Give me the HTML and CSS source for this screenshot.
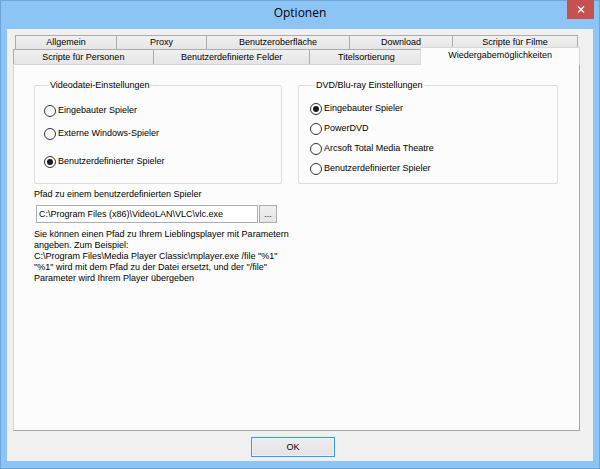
FILE: index.html
```html
<!DOCTYPE html>
<html lang="de">
<head>
<meta charset="utf-8">
<title>Optionen</title>
<link rel="stylesheet" href="styles.css">
</head>
<body>
<div class="window">
  <div class="titlebar">
    <span class="title">Optionen</span>
    <button class="close" aria-label="Schließen">
      <svg width="8" height="7" viewBox="0 0 8 7"><path d="M1 0.5 L7 6.5 M7 0.5 L1 6.5" stroke="#fff" stroke-width="1.4" fill="none"/></svg>
    </button>
  </div>
  <div class="client">
    <div class="tabs">
      <div class="tabrow row1">
        <div class="tab t-allg">Allgemein</div>
        <div class="tab t-proxy">Proxy</div>
        <div class="tab t-ui">Benutzeroberfläche</div>
        <div class="tab t-dl">Download</div>
        <div class="tab t-sf">Scripte für Filme</div>
      </div>
      <div class="tabrow row2">
        <div class="tab t-sp">Scripte für Personen</div>
        <div class="tab t-bf">Benutzerdefinierte Felder</div>
        <div class="tab t-ts">Titelsortierung</div>
        <div class="tab t-wm active">Wiedergabemöglichkeiten</div>
      </div>
    </div>
    <div class="panel">
      <div class="groups">
        <fieldset class="group g-video">
          <legend>Videodatei-Einstellungen</legend>
          <label class="radio"><span class="circle"></span><span>Eingebauter Spieler</span></label>
          <label class="radio"><span class="circle"></span><span>Externe Windows-Spieler</span></label>
          <label class="radio r-last"><span class="circle checked"></span><span>Benutzerdefinierter Spieler</span></label>
        </fieldset>
        <fieldset class="group g-dvd">
          <legend>DVD/Blu-ray Einstellungen</legend>
          <label class="radio"><span class="circle checked"></span><span>Eingebauter Spieler</span></label>
          <label class="radio"><span class="circle"></span><span>PowerDVD</span></label>
          <label class="radio"><span class="circle"></span><span>Arcsoft Total Media Theatre</span></label>
          <label class="radio"><span class="circle"></span><span>Benutzerdefinierter Spieler</span></label>
        </fieldset>
      </div>
      <div class="path-label">Pfad zu einem benutzerdefinierten Spieler</div>
      <div class="path-row">
        <div class="textbox">C:\Program Files (x86)\VideoLAN\VLC\vlc.exe</div>
        <button class="browse">...</button>
      </div>
      <p class="desc">Sie können einen Pfad zu Ihrem Lieblingsplayer mit Parametern<br>angeben. Zum Beispiel:<br>C:\Program Files\Media Player Classic\mplayer.exe /file "%1"<br>"%1" wird mit dem Pfad zu der Datei ersetzt, und der "/file"<br>Parameter wird Ihrem Player übergeben</p>
    </div>
    <div class="footer">
      <button class="ok">OK</button>
    </div>
  </div>
</div>
</body>
</html>
```

FILE: styles.css
```css
* { box-sizing: border-box; }
html, body { margin: 0; padding: 0; }
body {
  width: 600px;
  height: 469px;
  overflow: hidden;
  font-family: "Liberation Sans", Arial, sans-serif;
  font-size: 9px;
  color: #000;
  background: #fff;
}
button { font-family: inherit; font-size: inherit; color: inherit; }

.window {
  width: 600px;
  height: 469px;
  background: #8cc5f5;
  border: 1px solid #6ea5d9;
  padding: 0 6px 7px 6px;
  display: flex;
  flex-direction: column;
}

.titlebar {
  height: 28px;
  display: grid;
  grid-template-columns: 1fr auto 1fr;
  align-items: start;
}
.title {
  grid-column: 2;
  font-family: "Open Sans", "Noto Sans", sans-serif;
  font-size: 12px;
  line-height: 16px;
  margin-top: 4px;
  color: #000;
}
.close {
  grid-column: 3;
  justify-self: end;
  width: 27px;
  height: 19px;
  margin: -1px -1px 0 0;
  padding: 0;
  border: 0;
  background: #c75050;
  display: flex;
  align-items: center;
  justify-content: center;
}
.close svg { display: block; }

.client {
  flex: 1;
  background: #f0f0f0;
  padding: 6px 13px 0 6px;
  display: flex;
  flex-direction: column;
}

.tabs { display: flex; flex-direction: column; }
.tabrow { display: flex; }
.row1 { height: 14px; margin-left: 2px; }
.row2 { height: 15px; }
.tab {
  border: 1px solid #acacac;
  border-bottom: 0;
  background: linear-gradient(#f0f0f0, #e5e5e5);
  text-align: center;
  line-height: 13px;
  white-space: nowrap;
}
.tab + .tab { margin-left: -1px; }
.row1 .tab { height: 14px; }
.row2 .tab { height: 15px; line-height: 14px; }
.t-allg { width: 102px; }
.t-proxy { width: 91px; }
.t-ui { width: 144px; }
.t-dl { width: 104px; }
.t-sf { width: 126px; }
.t-sp { width: 141px; }
.t-bf { width: 158px; }
.t-ts { width: 114px; }
.row2 .tab.active {
  width: 160px;
  height: 18px;
  margin-top: -2px;
  margin-left: -3px;
  line-height: 14px;
  background: #fcfcfc;
  border-color: #d9d9d9;
  position: relative;
  z-index: 1;
}

.panel {
  width: 567px;
  height: 367px;
  background: #fcfcfc;
  border: 1px solid;
  border-color: #d4d4d4 #a6a6a6 #a6a6a6 #d4d4d4;
  padding: 15px 0 0 20px;
  display: flex;
  flex-direction: column;
  align-items: flex-start;
}

.groups { display: flex; gap: 16px; }
.group {
  margin: 0;
  padding: 0;
  min-width: 0;
  height: 104px;
  border: 1px solid #dcdcdc;
  border-radius: 2px;
  display: flex;
  flex-direction: column;
  align-items: flex-start;
}
.group legend {
  margin-left: 5px;
  padding: 0 1px;
  line-height: 11px;
}
.g-video { width: 248px; padding: 13px 0 0 9px; gap: 10px; }
.g-video .r-last { margin-top: 5px; }
.g-dvd { width: 260px; padding: 11px 0 0 11px; gap: 7px; }

.radio {
  display: flex;
  align-items: center;
  gap: 2px;
  height: 13px;
  line-height: 11px;
  white-space: nowrap;
}
.circle {
  width: 12px;
  height: 12px;
  border: 1px solid #333;
  border-radius: 50%;
  background: #fff;
  display: flex;
  align-items: center;
  justify-content: center;
  flex: none;
}
.circle.checked::after {
  content: "";
  width: 6px;
  height: 6px;
  border-radius: 50%;
  background: #1a1a1a;
}

.path-label {
  margin-top: 5px;
  line-height: 11px;
}
.path-row {
  display: flex;
  gap: 1px;
  margin-top: 5px;
  margin-left: 2px;
}
.textbox {
  width: 222px;
  height: 18px;
  border: 1px solid #abadb3;
  background: #fff;
  padding-left: 2px;
  line-height: 16px;
  white-space: nowrap;
}
.browse {
  width: 18px;
  height: 18px;
  padding: 0;
  border: 1px solid #acacac;
  background: linear-gradient(#f0f0f0, #e5e5e5);
  line-height: 14px;
  text-align: center;
}
.desc {
  margin: 6px 0 0 0;
  line-height: 11px;
}

.footer {
  flex: 1;
  display: flex;
  align-items: flex-start;
  padding: 6px 0 0 238px;
}
.ok {
  width: 84px;
  height: 20px;
  padding: 0;
  border: 1px solid #3399ff;
  background: linear-gradient(#ececec, #e4e4e4);
  box-shadow: inset 0 0 0 1px #e8f2fc;
}
```
